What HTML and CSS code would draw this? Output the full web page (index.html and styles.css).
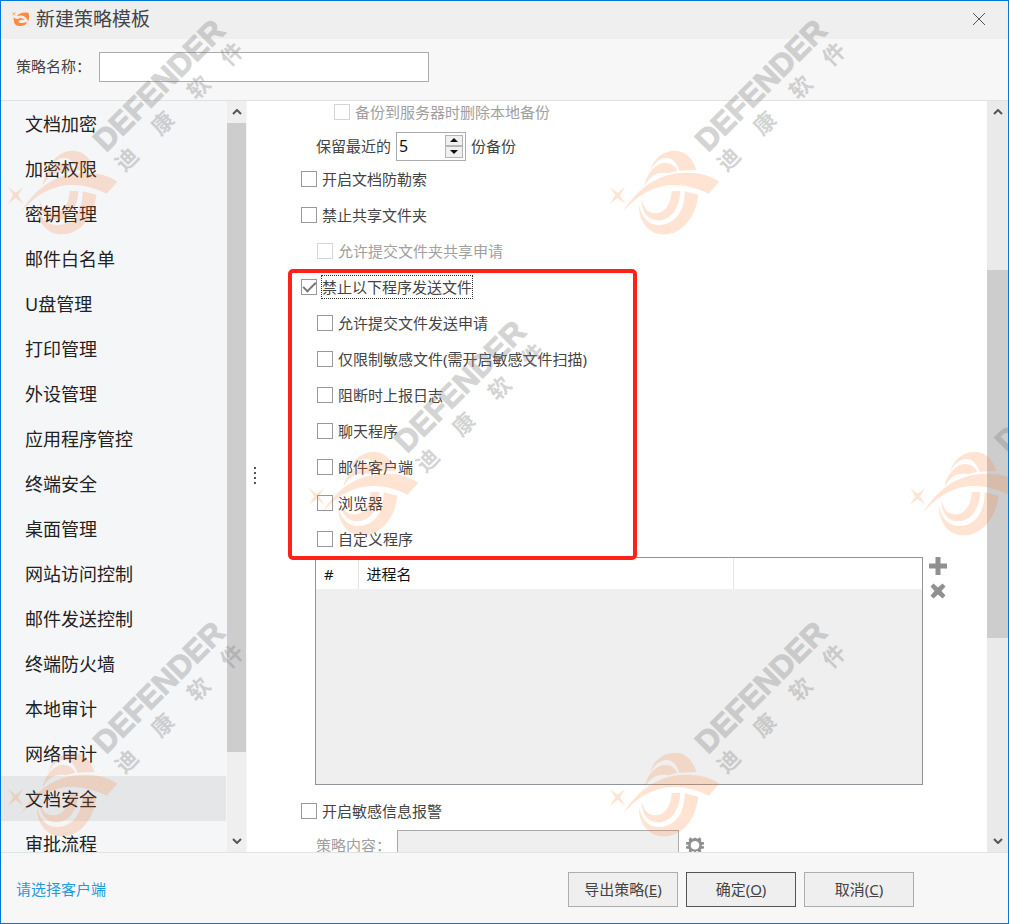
FILE: index.html
```html
<!DOCTYPE html>
<html lang="zh">
<head>
    <meta charset="UTF-8">
    <meta name="viewport" content="width=device-width, initial-scale=1.0">
    <title>新建策略模板</title>
    <link rel="stylesheet" href="styles.css">
</head>
<body>
    <div class="window">
        <header class="titlebar">
            <svg class="app-icon" viewBox="0 0 20 18" aria-hidden="true">
                <path d="M0 1l2 1 2-1-1 2 1 2-2-1-2 1 1-2z" fill="#ffb27a"/>
                <path d="M5 5.500C7 2.500 12 1 17.500 2c.8 3 .7 6-.5 9-1-3-2.500-4.500-4.500-5.500C10 4.500 7.500 4.800 5 5.500z"/>
                <path d="M1 7c4 2 5 1.500 8 .5 2 0 3.500 1 4 2.500-3-1.500-5.500-.5-6 1 0 2 4 2.500 9 .5-1 3-3.500 4.500-7 4.500-4.500 0-7-2.500-7-5.500C2 9 1.500 8 1 7z"/>
            </svg>
            <h1>新建策略模板</h1>
            <button class="close" aria-label="关闭">
                <svg viewBox="0 0 14 14"><path d="M1 1l12 12M13 1L1 13"/></svg>
            </button>
        </header>

        <div class="name-bar">
            <label for="policyName">策略名称：</label>
            <input type="text" id="policyName" class="name-input">
        </div>

        <div class="body">
            <nav class="sidebar">
                <a href="#">文档加密</a>
                <a href="#">加密权限</a>
                <a href="#">密钥管理</a>
                <a href="#">邮件白名单</a>
                <a href="#">U盘管理</a>
                <a href="#">打印管理</a>
                <a href="#">外设管理</a>
                <a href="#">应用程序管控</a>
                <a href="#">终端安全</a>
                <a href="#">桌面管理</a>
                <a href="#">网站访问控制</a>
                <a href="#">邮件发送控制</a>
                <a href="#">终端防火墙</a>
                <a href="#">本地审计</a>
                <a href="#">网络审计</a>
                <a href="#" class="active">文档安全</a>
                <a href="#">审批流程</a>
            </nav>
            <div class="scrollbar side-scroll">
                <svg viewBox="0 0 10 6"><path d="M1 5l4-4 4 4"/></svg>
                <div class="track"><div class="thumb"></div></div>
                <svg viewBox="0 0 10 6"><path d="M1 1l4 4 4-4"/></svg>
            </div>
            <div class="splitter"><i></i><i></i><i></i><i></i></div>

            <main class="content">
                <div class="row first indent-2">
                    <input type="checkbox" id="delLocal" disabled>
                    <label for="delLocal">备份到服务器时删除本地备份</label>
                </div>
                <div class="row keep">
                    <label for="keepCount">保留最近的</label>
                    <div class="spin">
                        <input type="text" id="keepCount" value="5">
                        <div class="spin-buttons">
                            <button aria-label="增加"><svg viewBox="0 0 8 4"><path d="M0 4l4-4 4 4z"/></svg></button>
                            <button aria-label="减少"><svg viewBox="0 0 8 4"><path d="M0 0l4 4 4-4z"/></svg></button>
                        </div>
                    </div>
                    <span>份备份</span>
                </div>
                <div class="row">
                    <input type="checkbox" id="ransom">
                    <label for="ransom">开启文档防勒索</label>
                </div>
                <div class="row">
                    <input type="checkbox" id="noShare">
                    <label for="noShare">禁止共享文件夹</label>
                </div>
                <div class="row indent-1">
                    <input type="checkbox" id="shareApply" disabled>
                    <label for="shareApply">允许提交文件夹共享申请</label>
                </div>

                <div class="highlight">
                    <div class="row">
                        <input type="checkbox" id="noSend" checked>
                        <label for="noSend" class="focused">禁止以下程序发送文件</label>
                    </div>
                    <div class="row indent-1">
                        <input type="checkbox" id="sendApply">
                        <label for="sendApply">允许提交文件发送申请</label>
                    </div>
                    <div class="row indent-1">
                        <input type="checkbox" id="sensitiveOnly">
                        <label for="sensitiveOnly">仅限制敏感文件(需开启敏感文件扫描)</label>
                    </div>
                    <div class="row indent-1">
                        <input type="checkbox" id="report">
                        <label for="report">阻断时上报日志</label>
                    </div>
                    <div class="row indent-1">
                        <input type="checkbox" id="chat">
                        <label for="chat">聊天程序</label>
                    </div>
                    <div class="row indent-1">
                        <input type="checkbox" id="mail">
                        <label for="mail">邮件客户端</label>
                    </div>
                    <div class="row indent-1">
                        <input type="checkbox" id="browser">
                        <label for="browser">浏览器</label>
                    </div>
                    <div class="row indent-1">
                        <input type="checkbox" id="custom">
                        <label for="custom">自定义程序</label>
                    </div>
                </div>

                <div class="process">
                    <div class="process-list">
                        <table>
                            <thead>
                                <tr><th class="col-no">#</th><th class="col-name">进程名</th><th></th></tr>
                            </thead>
                        </table>
                    </div>
                    <div class="process-tools">
                        <button aria-label="添加"><svg viewBox="0 0 18 18"><path d="M6.500 0h5v6.500H18v5h-6.500V18h-5v-6.500H0v-5h6.500z"/></svg></button>
                        <button aria-label="删除"><svg viewBox="0 0 18 18"><path d="M4.500 1.500L9 5.500l4.500-4 3 3-4 4.500 4 4.500-3 3-4.500-4-4.500 4-3-3 4-4.500-4-4.500z"/></svg></button>
                    </div>
                </div>

                <div class="row alarm">
                    <input type="checkbox" id="alarm">
                    <label for="alarm">开启敏感信息报警</label>
                </div>
                <div class="row rule">
                    <label for="ruleContent">策略内容：</label>
                    <input type="text" id="ruleContent" class="rule-input" disabled>
                    <button class="gear" aria-label="设置">
                        <svg viewBox="0 0 20 20"><path fill-rule="evenodd" d="M4.500 1.500L7 3l1.500-.5.500-.5h2l.5.500L13 3l2.500-1.500L17 4l-.5 2.500L20 7v2.500l-2.500.5 0 1 2.500.5V14l-3.500.5.500 2.500-1.500 1.500L13 17h-2v2H9v-2H7l-2.500 1.500L3 17l.5-2.500L0 14v-2.500l2.500-.5v-1L0 9.500V7l3.500-.5L3 4zM10 5.500a4.800 4.800 0 1 0 .01 0z"/></svg>
                    </button>
                </div>
            </main>
            <div class="scrollbar main-scroll">
                <svg viewBox="0 0 10 6"><path d="M1 5l4-4 4 4"/></svg>
                <div class="track"><div class="thumb"></div></div>
                <svg viewBox="0 0 10 6"><path d="M1 1l4 4 4-4"/></svg>
            </div>
        </div>

        <footer class="footer">
            <a href="#">请选择客户端</a>
            <div class="actions">
                <button>导出策略(<u>E</u>)</button>
                <button class="default">确定(<u>O</u>)</button>
                <button>取消(<u>C</u>)</button>
            </div>
        </footer>

        <!-- 水印 -->
        <svg class="watermark" aria-hidden="true">
            <defs>
                <g id="logo" transform="translate(-12 0) scale(.3333)">
                    <path d="M60 561l23 17 23-17-16 25 16 25-23-17-23 17 16-25z"/>
                    <path d="M180 512C190 476 220 452 255 452c34 0 55 27 64 58l-51 2c-7-24-22-38-38-38-20 0-37 14-50 38z"/>
                    <path d="M164 557c5-36 34-68 62-68 18 0 30 11 36 23l-28 8c-32-6-52 6-70 37z"/>
                    <path d="M98 637C142 564 205 518 290 518c40 0 76 10 98 27l-32 36C270 540 180 540 98 637z"/>
                    <path d="M245 573h26c-2 50-27 88-66 88-32 0-51-25-50-64 6 29 19 43 41 43 29 0 47-28 49-67z"/>
                    <path d="M284 574l41 10c-6 66-49 119-103 119-46 0-76-37-75-89 7 38 29 61 61 61 47 0 77-43 76-101z"/>
                </g>
            </defs>
            <g>
                <use href="#logo"/>
                <g class="wm-text" transform="translate(106 153) rotate(-45)">
                    <text class="wm-en" x="0" y="0">DEFENDER</text>
                    <text class="wm-cn" y="27"><tspan x="10">迪</tspan><tspan x="61">康</tspan><tspan x="112">软</tspan><tspan x="159">件</tspan></text>
                </g>
            </g>
            <g transform="translate(602 0)">
                <use href="#logo"/>
                <g class="wm-text" transform="translate(106 153) rotate(-45)">
                    <text class="wm-en" x="0" y="0">DEFENDER</text>
                    <text class="wm-cn" y="27"><tspan x="10">迪</tspan><tspan x="61">康</tspan><tspan x="112">软</tspan><tspan x="159">件</tspan></text>
                </g>
            </g>
            <g transform="translate(301 301)">
                <use href="#logo"/>
                <g class="wm-text" transform="translate(106 153) rotate(-45)">
                    <text class="wm-en" x="0" y="0">DEFENDER</text>
                    <text class="wm-cn" y="27"><tspan x="10">迪</tspan><tspan x="61">康</tspan><tspan x="112">软</tspan><tspan x="159">件</tspan></text>
                </g>
            </g>
            <g transform="translate(902 301)">
                <use href="#logo"/>
                <g class="wm-text" transform="translate(106 153) rotate(-45)">
                    <text class="wm-en" x="0" y="0">DEFENDER</text>
                </g>
            </g>
            <g transform="translate(0 602)">
                <use href="#logo"/>
                <g class="wm-text" transform="translate(106 153) rotate(-45)">
                    <text class="wm-en" x="0" y="0">DEFENDER</text>
                    <text class="wm-cn" y="27"><tspan x="10">迪</tspan><tspan x="61">康</tspan><tspan x="112">软</tspan><tspan x="159">件</tspan></text>
                </g>
            </g>
            <g transform="translate(602 602)">
                <use href="#logo"/>
                <g class="wm-text" transform="translate(106 153) rotate(-45)">
                    <text class="wm-en" x="0" y="0">DEFENDER</text>
                    <text class="wm-cn" y="27"><tspan x="10">迪</tspan><tspan x="61">康</tspan><tspan x="112">软</tspan><tspan x="159">件</tspan></text>
                </g>
            </g>
        </svg>
    </div>
</body>
</html>
```
FILE: styles.css
```css
* {
    box-sizing: border-box;
}
body {
    margin: 0;
    font-family: "Noto Sans", "Noto Sans CJK SC", sans-serif;
    font-size: 15px;
    line-height: 22px;
    color: #444;
}
button, input {
    font: inherit;
    color: inherit;
    margin: 0;
    padding: 0;
}
label {
    white-space: nowrap;
}
svg {
    display: block;
}
.window {
    position: relative;
    display: flex;
    flex-direction: column;
    height: 100vh;
    border: 1px solid #0078d7;
    background: #f7f7f7;
    overflow: hidden;
}

/* title bar */
.titlebar {
    display: flex;
    align-items: center;
    flex: none;
    height: 38px;
    padding: 0 22px 2px 11px;
    background: #efefef;
}
.app-icon {
    width: 19px;
    height: 17px;
    fill: #ff8a3d;
}
.titlebar h1 {
    flex: 1;
    margin: 0 0 0 5px;
    font-size: 19px;
    font-weight: 400;
}
.close {
    border: none;
    background: none;
}
.close svg {
    width: 14px;
    height: 14px;
    fill: none;
    stroke: #555;
}

.name-bar {
    display: flex;
    align-items: center;
    flex: none;
    height: 62px;
    padding: 0 15px 6px;
    border-bottom: 1px solid #e0e0e0;
}
.name-bar label {
    width: 83px;
    padding-bottom: 2px;
}
.name-input {
    width: 330px;
    height: 30px;
    padding: 0 6px;
    border: 1px solid #ababab;
    background: #fff;
}

.body {
    display: flex;
    flex: 1;
    min-height: 0;
    background: #fff;
}

/* left menu */
.sidebar {
    width: 225px;
    flex: none;
    background: #f4f6f8;
    overflow: hidden;
}
.sidebar a {
    display: block;
    height: 45px;
    padding-left: 24px;
    font-size: 18px;
    line-height: 47px;
    color: #222;
    text-decoration: none;
}
.sidebar a.active {
    background: #e5e6e8;
}

.scrollbar {
    display: flex;
    flex-direction: column;
    align-items: center;
    flex: none;
    width: 21px;
    padding: 8px 0;
    background: #efefef;
}
.scrollbar svg {
    width: 10px;
    height: 6px;
    fill: none;
    stroke: #555;
    stroke-width: 2;
}
.track {
    flex: 1;
    align-self: stretch;
    margin: 8px 0;
}
.thumb {
    background: #cdcdcd;
}
.side-scroll {
    border: solid #f4f6f8;
    border-width: 0 1px;
}
.side-scroll .thumb {
    height: 89%;
}
.main-scroll {
    background: #eaeaea;
}
.main-scroll .thumb {
    height: 52%;
    margin-top: 147px;
}
.splitter {
    display: flex;
    flex-direction: column;
    justify-content: center;
    align-items: center;
    gap: 3px;
    flex: none;
    width: 16px;
    padding-bottom: 2px;
}
.splitter i {
    width: 2px;
    height: 2px;
    background: #555;
}

/* settings */
.content {
    flex: 1;
    min-width: 0;
    padding-left: 38px;
    overflow: hidden;
}
.row {
    display: flex;
    align-items: center;
    gap: 5px;
    height: 36px;
}
.row.first {
    height: 22px;
}
.indent-1 {
    padding-left: 16px;
}
.indent-2 {
    padding-left: 33px;
}
input[type="checkbox"] {
    appearance: none;
    display: grid;
    place-items: center;
    flex: none;
    width: 16px;
    height: 16px;
    border: 1px solid #999;
    background: #fff;
}
input[type="checkbox"]:checked::after {
    content: "";
    width: 11px;
    height: 5px;
    margin-top: -4px;
    border: solid #777;
    border-width: 0 0 2px 2px;
    transform: rotate(-45deg);
}
input[type="checkbox"]:disabled {
    border-color: #d5d5d5;
}
input:disabled + label,
.rule label {
    color: #a0a0a0;
}
.focused {
    outline: 1px dotted #333;
}
.row.keep {
    height: 38px;
    padding: 8px 0 0 15px;
}
.spin {
    display: flex;
    width: 70px;
    height: 29px;
    padding: 2px;
    border: 1px solid #ababab;
}
.spin input {
    flex: 1;
    min-width: 0;
    border: none;
    font-size: 16px;
    color: #111;
}
.spin-buttons {
    display: flex;
    flex-direction: column;
    width: 18px;
}
.spin-buttons button {
    display: grid;
    place-items: center;
    flex: 1;
    border: 1px solid #b5b5b5;
    background: #f0f0f0;
}
.spin-buttons svg {
    width: 8px;
    height: 4px;
    fill: #111;
}

/* red frame around the send rules */
.highlight {
    position: relative;
    width: 336px;
}
.highlight::after {
    content: "";
    position: absolute;
    inset: 0 0 -3px -13px;
    border: 4px solid #ff2218;
    border-radius: 5px;
    pointer-events: none;
}

.process {
    display: flex;
    gap: 6px;
    padding: 0 40px 0 14px;
}
.process-list {
    flex: 1;
    height: 228px;
    border: 1px solid #8f959c;
    background: #efefef;
}
.process-list table {
    width: 100%;
    border-collapse: collapse;
    table-layout: fixed;
    background: #fff;
}
.process-list th {
    height: 31px;
    padding: 0 8px;
    border-right: 1px solid #e5e5e5;
    font-weight: 400;
    text-align: left;
    color: #111;
}
.process-list th:last-child {
    border-right: none;
}
.col-no {
    width: 42px;
}
.col-name {
    width: 375px;
}
.process-tools {
    display: flex;
    flex-direction: column;
    gap: 7px;
}
.process-tools button,
.gear {
    width: 18px;
    height: 18px;
    border: none;
    background: none;
}
.process-tools svg,
.gear svg {
    width: 18px;
    height: 18px;
    fill: #909090;
}
.row.alarm {
    margin-top: 8px;
}
.row.rule {
    gap: 7px;
    padding-left: 15px;
    height: 32px;
}
.rule label {
    width: 74px;
}
.rule-input {
    width: 282px;
    height: 30px;
    border: 1px solid #ababab;
    background: #efefef;
}

.footer {
    display: flex;
    align-items: center;
    justify-content: space-between;
    flex: none;
    height: 71px;
    padding: 2px 94px 0 15px;
    border-top: 1px solid #e3e3e3;
}
.footer a {
    color: #1e9be0;
    text-decoration: none;
}
.actions {
    display: flex;
    gap: 8px;
}
.actions button {
    width: 110px;
    height: 35px;
    border: 1px solid #adadad;
    background: #efefef;
}
.actions .default {
    border-color: #555;
}

.watermark {
    position: absolute;
    top: -1px;
    left: -1px;
    width: 100%;
    height: 100%;
    fill: #ff7828;
    fill-opacity: .2;
    pointer-events: none;
    overflow: visible;
}
.wm-text {
    fill: #808080;
    fill-opacity: 1;
    opacity: .33;
    font-weight: 700;
}
.wm-en {
    font-family: "Liberation Sans", Arial, sans-serif;
    font-size: 31px;
    stroke: #808080;
    stroke-width: 1;
}
.wm-cn {
    font-family: "Noto Sans CJK SC", sans-serif;
    font-size: 22px;
    text-anchor: middle;
}
```
